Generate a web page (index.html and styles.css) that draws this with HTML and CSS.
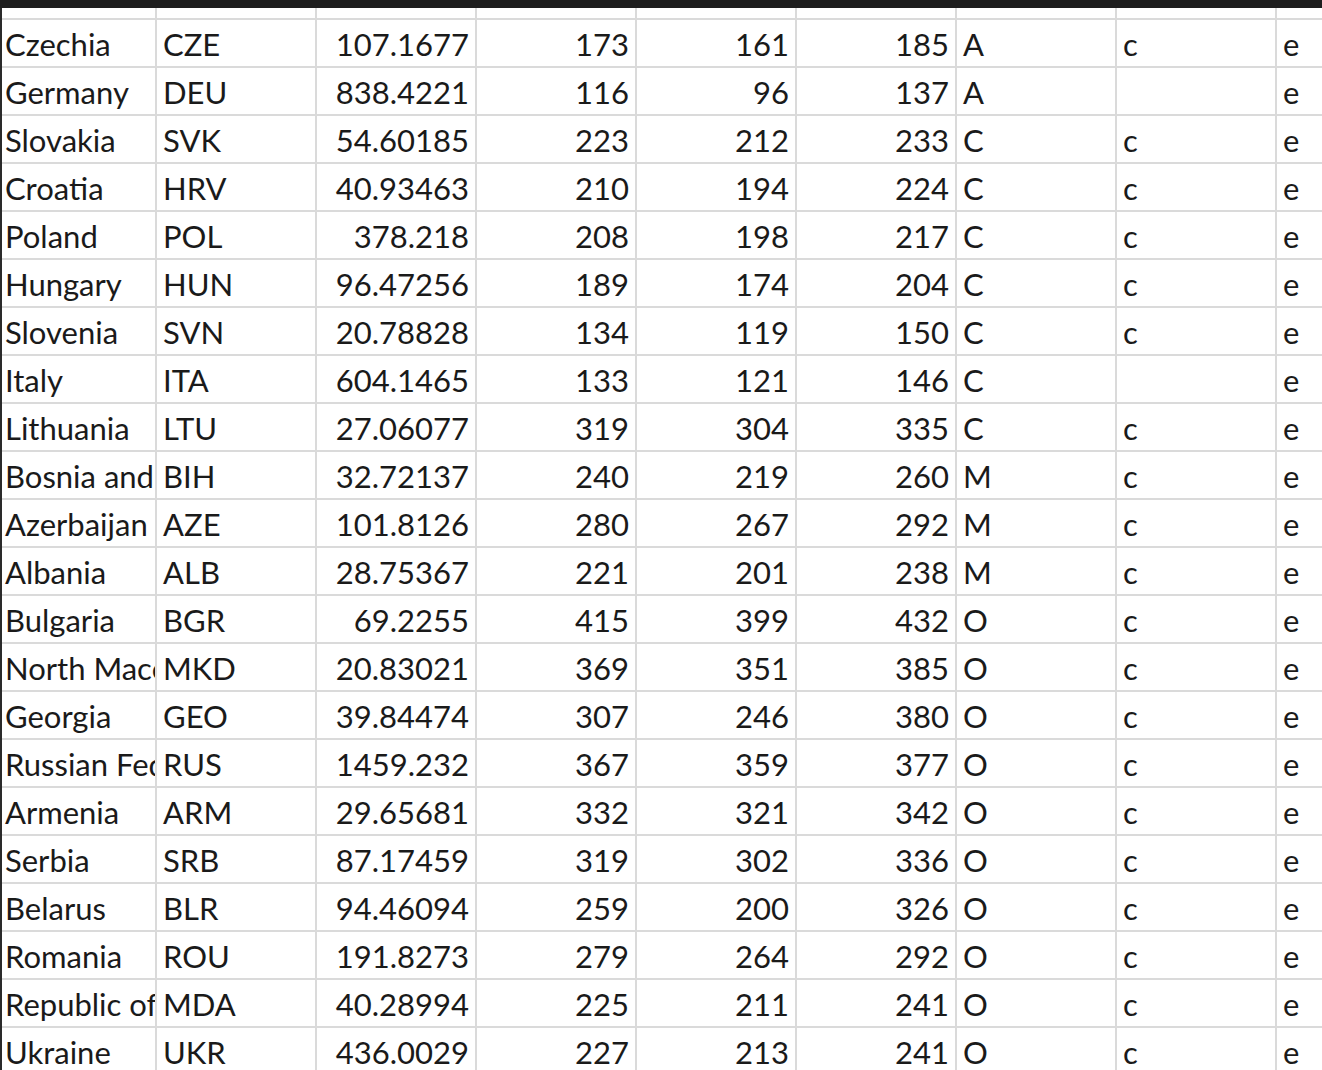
FILE: index.html
```html
<!DOCTYPE html>
<html>
<head>
<meta charset="utf-8">
<link rel="stylesheet" href="styles.css">
</head>
<body>
<div class="topbar"></div>
<div class="sheet">
  <div class="edge"></div>
  <div class="grid">
    <div class="c"></div><div class="c"></div><div class="c"></div><div class="c"></div><div class="c"></div><div class="c"></div><div class="c"></div><div class="c"></div><div class="c last"></div>

    <div class="c t first">Czechia</div><div class="c t">CZE</div><div class="c n">107.1677</div><div class="c n">173</div><div class="c n">161</div><div class="c n">185</div><div class="c t">A</div><div class="c t">c</div><div class="c t last">e</div>
    <div class="c t first">Germany</div><div class="c t">DEU</div><div class="c n">838.4221</div><div class="c n">116</div><div class="c n">96</div><div class="c n">137</div><div class="c t">A</div><div class="c t"></div><div class="c t last">e</div>
    <div class="c t first">Slovakia</div><div class="c t">SVK</div><div class="c n">54.60185</div><div class="c n">223</div><div class="c n">212</div><div class="c n">233</div><div class="c t">C</div><div class="c t">c</div><div class="c t last">e</div>
    <div class="c t first">Croatia</div><div class="c t">HRV</div><div class="c n">40.93463</div><div class="c n">210</div><div class="c n">194</div><div class="c n">224</div><div class="c t">C</div><div class="c t">c</div><div class="c t last">e</div>
    <div class="c t first">Poland</div><div class="c t">POL</div><div class="c n">378.218</div><div class="c n">208</div><div class="c n">198</div><div class="c n">217</div><div class="c t">C</div><div class="c t">c</div><div class="c t last">e</div>
    <div class="c t first">Hungary</div><div class="c t">HUN</div><div class="c n">96.47256</div><div class="c n">189</div><div class="c n">174</div><div class="c n">204</div><div class="c t">C</div><div class="c t">c</div><div class="c t last">e</div>
    <div class="c t first">Slovenia</div><div class="c t">SVN</div><div class="c n">20.78828</div><div class="c n">134</div><div class="c n">119</div><div class="c n">150</div><div class="c t">C</div><div class="c t">c</div><div class="c t last">e</div>
    <div class="c t first">Italy</div><div class="c t">ITA</div><div class="c n">604.1465</div><div class="c n">133</div><div class="c n">121</div><div class="c n">146</div><div class="c t">C</div><div class="c t"></div><div class="c t last">e</div>
    <div class="c t first">Lithuania</div><div class="c t">LTU</div><div class="c n">27.06077</div><div class="c n">319</div><div class="c n">304</div><div class="c n">335</div><div class="c t">C</div><div class="c t">c</div><div class="c t last">e</div>
    <div class="c t first">Bosnia and Herzegovina</div><div class="c t">BIH</div><div class="c n">32.72137</div><div class="c n">240</div><div class="c n">219</div><div class="c n">260</div><div class="c t">M</div><div class="c t">c</div><div class="c t last">e</div>
    <div class="c t first">Azerbaijan</div><div class="c t">AZE</div><div class="c n">101.8126</div><div class="c n">280</div><div class="c n">267</div><div class="c n">292</div><div class="c t">M</div><div class="c t">c</div><div class="c t last">e</div>
    <div class="c t first">Albania</div><div class="c t">ALB</div><div class="c n">28.75367</div><div class="c n">221</div><div class="c n">201</div><div class="c n">238</div><div class="c t">M</div><div class="c t">c</div><div class="c t last">e</div>
    <div class="c t first">Bulgaria</div><div class="c t">BGR</div><div class="c n">69.2255</div><div class="c n">415</div><div class="c n">399</div><div class="c n">432</div><div class="c t">O</div><div class="c t">c</div><div class="c t last">e</div>
    <div class="c t first">North Macedonia</div><div class="c t">MKD</div><div class="c n">20.83021</div><div class="c n">369</div><div class="c n">351</div><div class="c n">385</div><div class="c t">O</div><div class="c t">c</div><div class="c t last">e</div>
    <div class="c t first">Georgia</div><div class="c t">GEO</div><div class="c n">39.84474</div><div class="c n">307</div><div class="c n">246</div><div class="c n">380</div><div class="c t">O</div><div class="c t">c</div><div class="c t last">e</div>
    <div class="c t first">Russian Federation</div><div class="c t">RUS</div><div class="c n">1459.232</div><div class="c n">367</div><div class="c n">359</div><div class="c n">377</div><div class="c t">O</div><div class="c t">c</div><div class="c t last">e</div>
    <div class="c t first">Armenia</div><div class="c t">ARM</div><div class="c n">29.65681</div><div class="c n">332</div><div class="c n">321</div><div class="c n">342</div><div class="c t">O</div><div class="c t">c</div><div class="c t last">e</div>
    <div class="c t first">Serbia</div><div class="c t">SRB</div><div class="c n">87.17459</div><div class="c n">319</div><div class="c n">302</div><div class="c n">336</div><div class="c t">O</div><div class="c t">c</div><div class="c t last">e</div>
    <div class="c t first">Belarus</div><div class="c t">BLR</div><div class="c n">94.46094</div><div class="c n">259</div><div class="c n">200</div><div class="c n">326</div><div class="c t">O</div><div class="c t">c</div><div class="c t last">e</div>
    <div class="c t first">Romania</div><div class="c t">ROU</div><div class="c n">191.8273</div><div class="c n">279</div><div class="c n">264</div><div class="c n">292</div><div class="c t">O</div><div class="c t">c</div><div class="c t last">e</div>
    <div class="c t first">Republic of Moldova</div><div class="c t">MDA</div><div class="c n">40.28994</div><div class="c n">225</div><div class="c n">211</div><div class="c n">241</div><div class="c t">O</div><div class="c t">c</div><div class="c t last">e</div>
    <div class="c t first">Ukraine</div><div class="c t">UKR</div><div class="c n">436.0029</div><div class="c n">227</div><div class="c n">213</div><div class="c n">241</div><div class="c t">O</div><div class="c t">c</div><div class="c t last">e</div>
  </div>
</div>
</body>
</html>
```

FILE: styles.css
```css
html, body {
  margin: 0;
  padding: 0;
  background: #ffffff;
  overflow: hidden;
}
body {
  width: 1322px;
  height: 1070px;
}
.topbar {
  height: 8px;
  background: #1e1e1e;
}
.sheet {
  display: flex;
  height: 1062px;
  overflow: hidden;
}
.edge {
  width: 2px;
  flex: none;
  background: #2a2a2a;
}
.grid {
  flex: 1;
  display: grid;
  grid-template-columns: 155px repeat(7, 160px) 1fr;
  grid-auto-rows: 48px;
  grid-template-rows: 12px;
  font-family: Lato, "Open Sans", sans-serif;
  font-size: 31px;
  color: #1a1a1a;
  align-content: start;
}
.c {
  box-sizing: border-box;
  border-right: 2px solid #dadada;
  border-bottom: 2px solid #dadada;
  padding-top: 1px;
  line-height: 46px;
  white-space: nowrap;
  overflow: hidden;
  min-width: 0;
}
.c.last {
  border-right: none;
}
.t {
  padding-left: 6px;
  text-align: left;
}
.t.first {
  padding-left: 3px;
}
.n {
  padding-right: 6px;
  text-align: right;
}
```
